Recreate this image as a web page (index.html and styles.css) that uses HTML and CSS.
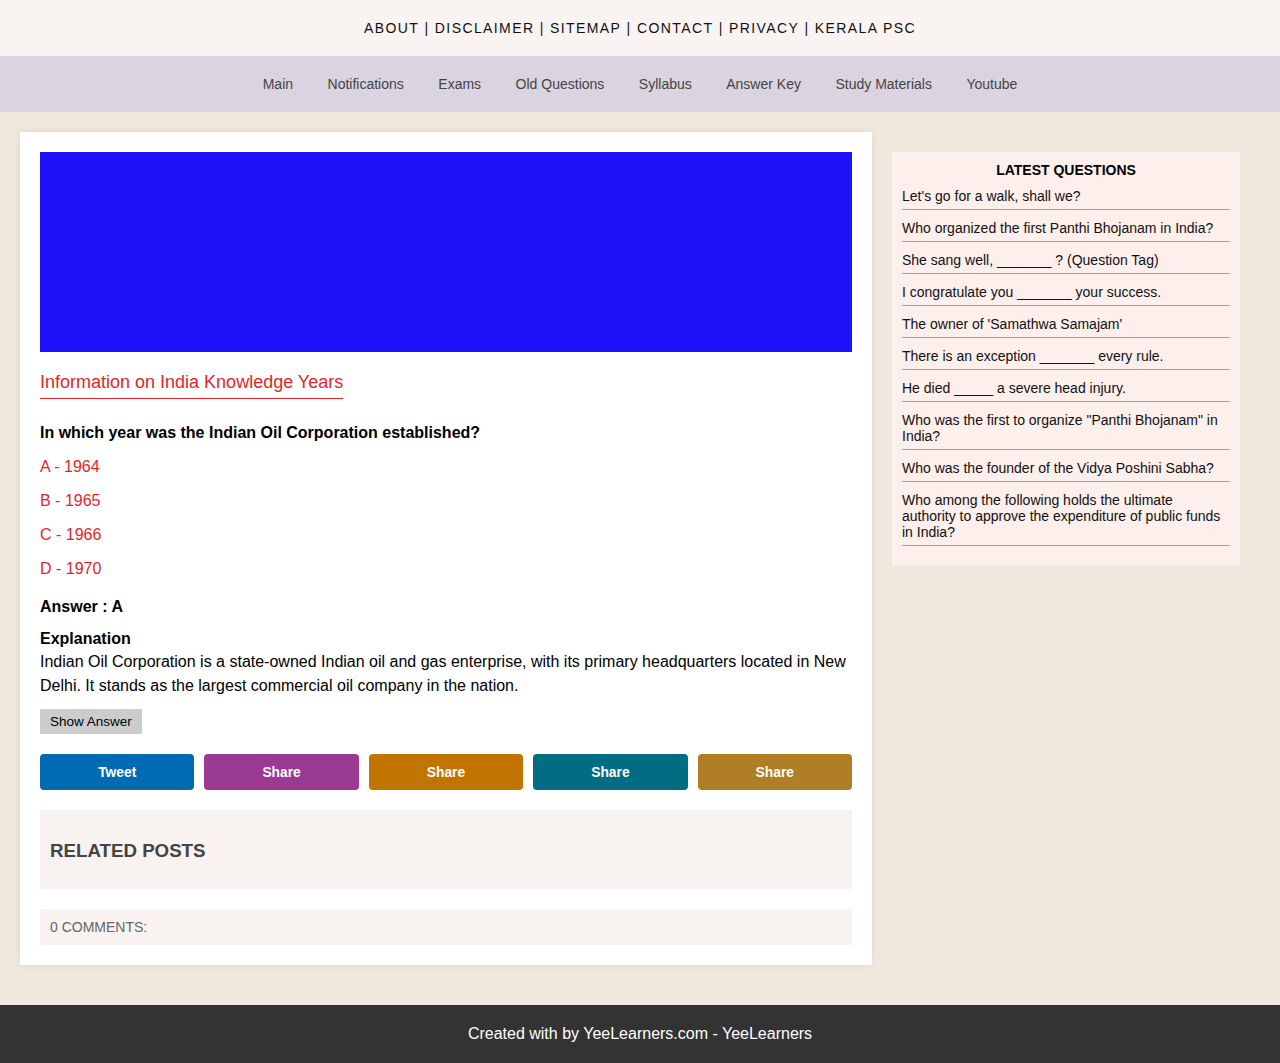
FILE: index.html
```html
<!DOCTYPE html>
<html lang="en">
<head>
<meta charset="utf-8">
<title>Information on India Knowledge Years</title>
<link rel="stylesheet" href="styles.css">
</head>
<body>
<div class="topbar">
  <a href="#">ABOUT</a> | <a href="#">DISCLAIMER</a> | <a href="#">SITEMAP</a> | <a href="#">CONTACT</a> | <a href="#">PRIVACY</a> | <a href="#">KERALA PSC</a>
</div>
<nav class="nav">
  <a href="#">Main</a>
  <a href="#">Notifications</a>
  <a href="#">Exams</a>
  <a href="#">Old Questions</a>
  <a href="#">Syllabus</a>
  <a href="#">Answer Key</a>
  <a href="#">Study Materials</a>
  <a href="#">Youtube</a>
</nav>
<div class="wrap">
  <main class="card">
    <div class="banner"></div>
    <h1 class="title">Information on India Knowledge Years</h1>
    <p class="question">In which year was the Indian Oil Corporation established?</p>
    <p class="option">A - 1964</p>
    <p class="option">B - 1965</p>
    <p class="option">C - 1966</p>
    <p class="option">D - 1970</p>
    <p class="answer">Answer : A</p>
    <p class="expl-head">Explanation</p>
    <p class="expl">Indian Oil Corporation is a state-owned Indian oil and gas enterprise, with its primary headquarters located in New Delhi. It stands as the largest commercial oil company in the nation.</p>
    <button class="show">Show Answer</button>
    <div class="shares">
      <a href="#" class="share tw">Tweet</a>
      <a href="#" class="share s2">Share</a>
      <a href="#" class="share s3">Share</a>
      <a href="#" class="share s4">Share</a>
      <a href="#" class="share s5">Share</a>
    </div>
    <div class="related"><h3>RELATED POSTS</h3></div>
    <div class="comments">0 COMMENTS:</div>
  </main>
  <aside class="side">
    <h4 class="side-title">LATEST QUESTIONS</h4>
    <ul class="latest">
      <li>Let's go for a walk, shall we?</li>
      <li>Who organized the first Panthi Bhojanam in India?</li>
      <li>She sang well, _______ ? (Question Tag)</li>
      <li>I congratulate you _______ your success.</li>
      <li>The owner of 'Samathwa Samajam'</li>
      <li>There is an exception _______ every rule.</li>
      <li>He died _____ a severe head injury.</li>
      <li>Who was the first to organize "Panthi Bhojanam" in India?</li>
      <li>Who was the founder of the Vidya Poshini Sabha?</li>
      <li>Who among the following holds the ultimate authority to approve the expenditure of public funds in India?</li>
    </ul>
  </aside>
</div>
<footer class="footer">Created with by YeeLearners.com - YeeLearners</footer>
</body>
</html>
```
FILE: styles.css
```css
* { box-sizing: border-box; }
body {
  margin: 0;
  background: #f0e8dc;
  font-family: "Liberation Sans", Arial, sans-serif;
  color: #000;
}
a { text-decoration: none; color: inherit; }

.topbar {
  height: 56px;
  background: #f9f4f1;
  display: flex;
  align-items: center;
  justify-content: center;
  font-size: 14px;
  letter-spacing: 1.4px;
  color: #111;
  white-space: pre;
}

.nav {
  height: 56px;
  background: #dad3e0;
  display: flex;
  align-items: center;
  justify-content: center;
  gap: 34.5px;
  font-size: 14px;
  color: #444;
}

.wrap {
  display: flex;
  align-items: flex-start;
  gap: 20px;
  padding: 20px 40px 40px 20px;
}

.card {
  width: 852px;
  flex: none;
  background: #fff;
  padding: 20px;
  box-shadow: 0 0 8px rgba(0, 0, 0, 0.08);
}

.banner {
  height: 200px;
  background: #1e12f8;
}

.title {
  display: inline-block;
  margin: 20px 0 0;
  padding-bottom: 6px;
  font-size: 18px;
  line-height: 20px;
  font-weight: normal;
  color: #e3262b;
  border-bottom: 1px solid #e3262b;
}

.question {
  margin: 24px 0 7px;
  font-size: 16px;
  line-height: 20px;
  font-weight: bold;
}

.option {
  margin: 0;
  padding: 8px 0;
  font-size: 16px;
  line-height: 18px;
  color: #e3262b;
}

.answer {
  margin: 11px 0 0;
  font-size: 16px;
  line-height: 20px;
  font-weight: bold;
}

.expl-head {
  margin: 11px 0 0;
  font-size: 16px;
  line-height: 22px;
  font-weight: bold;
}

.expl {
  margin: 0;
  font-size: 16px;
  line-height: 24px;
}

.show {
  display: block;
  margin-top: 11px;
  padding: 5px 10px;
  height: 25px;
  border: 0;
  border-radius: 0;
  background: #cccccc;
  font-family: "Liberation Sans", Arial, sans-serif;
  font-size: 13.5px;
  line-height: 15px;
  color: #000;
}

.shares {
  display: grid;
  grid-template-columns: repeat(5, 1fr);
  gap: 10px;
  margin-top: 20px;
}
.share {
  height: 36px;
  border-radius: 4px;
  display: flex;
  align-items: center;
  justify-content: center;
  color: #fff;
  font-weight: bold;
  font-size: 13.8px;
}
.tw { background: #006bb3; }
.s2 { background: #9b3a92; }
.s3 { background: #c17400; }
.s4 { background: #006d83; }
.s5 { background: #b07e24; }

.related {
  margin-top: 20px;
  background: #f8f3f0;
  padding: 30px 10px 28px;
}
.related h3 {
  margin: 0;
  font-size: 18.72px;
  line-height: 21px;
  font-weight: bold;
  color: #444;
}

.comments {
  margin-top: 20px;
  background: #f8f3f0;
  padding: 10px;
  font-size: 14px;
  line-height: 16px;
  color: #666;
}

.side {
  width: 348px;
  flex: none;
  margin-top: 20px;
  background: #fdefec;
  padding: 10px 10px 20px;
}
.side-title {
  margin: 0;
  text-align: center;
  font-size: 14px;
  line-height: 16px;
  font-weight: bold;
}
.latest {
  list-style: none;
  margin: 0;
  padding: 0;
}
.latest li {
  padding: 10px 0 5px;
  font-size: 14px;
  line-height: 16px;
  color: #111;
  border-bottom: 1px solid #d08ab8;
}

.footer {
  height: 58px;
  background: #333;
  color: #fff;
  font-size: 16px;
  display: flex;
  align-items: center;
  justify-content: center;
}
```
